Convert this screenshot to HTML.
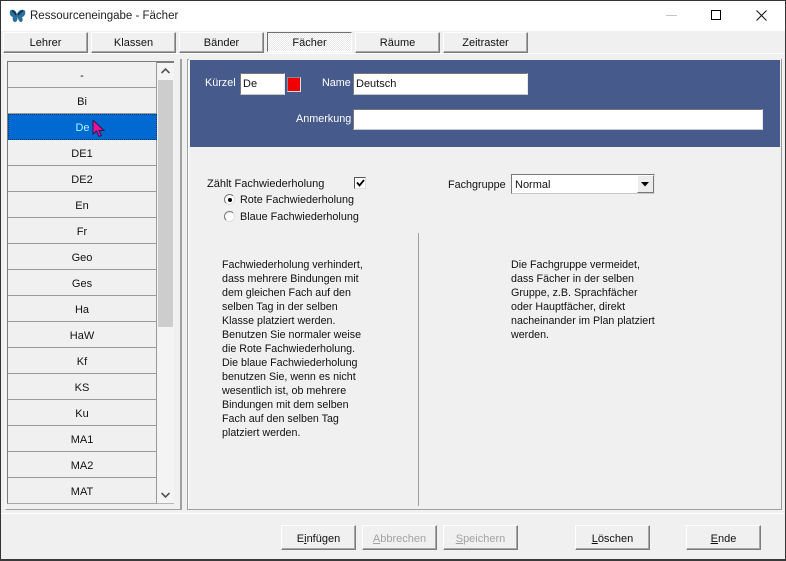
<!DOCTYPE html>
<html><head><meta charset="utf-8"><style>
html,body{margin:0;padding:0}
#w{position:relative;width:786px;height:561px;background:#f0f0f0;overflow:hidden;font-family:"Liberation Sans",sans-serif;font-size:11px;color:#111}
#w div,#w span.a{position:absolute;box-sizing:border-box}
.t{white-space:nowrap;line-height:14px}
.tab,.btn{display:flex;align-items:center;justify-content:center;background:#f0f0f0;border:1px solid;border-color:#fff #7c7c7c #7c7c7c #fff;box-shadow:inset -1px -1px 0 #a6a6a6;white-space:nowrap}
.tab{top:32px;height:21px;width:85px}
.btn{top:525px;height:25px;width:75px;padding-top:2px}
.dis{color:#a2a2a2}
.row{left:8px;width:149px;height:26px;text-align:center;line-height:26px;padding-top:1px;border-bottom:1px solid #9a9a9a;border-right:1px solid #9a9a9a;background:#f0f0f0}
.inp{background:#fff;border:1px solid;border-color:#777 #e8e8e8 #c8c8c8 #777;line-height:19px;padding-left:1px;padding-top:1px;white-space:nowrap}
.para{white-space:pre;line-height:14px;font-size:10.700px}
u{text-decoration:underline}
</style></head><body><div id="w">
<div style="left:0;top:0;width:786px;height:1px;background:#333"></div>
<div style="left:0;top:0;width:1px;height:561px;background:#333"></div>
<div style="right:0;top:0;width:1px;height:561px;background:#333"></div>
<div style="left:0;top:559px;width:786px;height:2px;background:#3a3a3a"></div>
<div style="left:1px;top:1px;width:784px;height:30px;background:#fff"></div>
<svg style="position:absolute;left:9px;top:8px" width="17" height="16" viewBox="0 0 17 16"><path d="M8 6C6 1 2 1 1 3c-1 3 1 6 3 6-1 2 0 5 2 5s3-3 2.500-6C9 11 10 14 12 14c2 0 2-3 1-5 2 0 4-3 3-6-1-2-6-2-8 3z" fill="#2b6f9c"/><path d="M3 3c1 0 3 1 4 4M14 3c-1 0-3 1-5 4" stroke="#0c2c44" fill="none" stroke-width="1.500"/></svg>
<div class="t" style="left:30px;top:9px;font-size:11.500px;color:#222">Ressourceneingabe - Fächer</div>
<div style="left:666px;top:15px;width:11px;height:1px;background:#c4c4c4"></div>
<div style="left:711px;top:10px;width:10px;height:10px;border:1px solid #000"></div>
<svg style="position:absolute;left:756px;top:10px" width="11" height="11"><path d="M.5.500l10 10M10.500.500l-10 10" stroke="#111" fill="none"/></svg>

<div class="tab" style="left:3px">Lehrer</div>
<div class="tab" style="left:91px">Klassen</div>
<div class="tab" style="left:179px">Bänder</div>
<div class="tab" style="left:267px;top:32px;height:20px;border-color:#6f6f6f #fff #fff #6f6f6f;box-shadow:none;background:repeating-conic-gradient(#fff 0 25%,#e6e6e6 0 50%) 0 0/2px 2px;padding-top:2px">Fächer</div>
<div class="tab" style="left:355px">Räume</div>
<div class="tab" style="left:443px">Zeitraster</div>

<div style="left:1px;top:53px;width:784px;height:1px;background:#fff"></div>
<div style="left:5px;top:59px;width:177px;height:451px;border:1px solid #a0a0a0;border-left-color:#f8f8f8;border-top:0;border-right-width:2px"></div>
<div style="left:7px;top:61px;width:167px;height:443px;border:1px solid #7d7d7d;border-right:0;border-bottom-color:#b5b5b5;background:#f4f4f4;"></div>
<div style="left:7px;top:61px;width:167px;height:2px;background:#7d7d7d"></div>
<div class="row" style="top:62px">-</div>
<div class="row" style="top:88px">Bi</div>
<div class="row" style="top:114px;background:#0069d2;color:#aef4ff;border:1px dotted #123a60;left:8px;line-height:25px">De</div>
<div class="row" style="top:140px">DE1</div>
<div class="row" style="top:166px">DE2</div>
<div class="row" style="top:192px">En</div>
<div class="row" style="top:218px">Fr</div>
<div class="row" style="top:244px">Geo</div>
<div class="row" style="top:270px">Ges</div>
<div class="row" style="top:296px">Ha</div>
<div class="row" style="top:322px">HaW</div>
<div class="row" style="top:348px">Kf</div>
<div class="row" style="top:374px">KS</div>
<div class="row" style="top:400px">Ku</div>
<div class="row" style="top:426px">MA1</div>
<div class="row" style="top:452px">MA2</div>
<div class="row" style="top:478px;border-bottom:1px solid #a8a8a8">MAT</div>
<div style="left:158px;top:80px;width:15px;height:247px;background:#cdcdcd"></div>
<svg style="position:absolute;left:161px;top:68px" width="9" height="6"><path d="M.5 5L4.500 1 8.500 5" stroke="#555" stroke-width="1.600" fill="none"/></svg>
<svg style="position:absolute;left:161px;top:492px" width="9" height="6"><path d="M.5 1L4.500 5 8.500 1" stroke="#555" stroke-width="1.600" fill="none"/></svg>
<svg style="position:absolute;left:92px;top:120px" width="14" height="18"><path d="M1 0v14l3.500-3 2.500 5.500 2.500-1-2.500-5h5z" fill="#e6129a" stroke="#2a1a4a"/></svg>

<div style="left:187px;top:59px;width:595px;height:451px;border:1px solid #a0a0a0;border-left:2px solid #a0a0a0;border-top:0;border-right-color:#9a9a9a"></div>
<div style="left:188px;top:60px;width:592px;height:449px;background:#f0f0f0;border-left:1px solid #fff"></div>
<div style="left:190px;top:60px;width:590px;height:87px;background:#465a8c"></div>

<div class="t" style="left:205px;top:76px;color:#fff;font-size:10.800px">Kürzel</div>
<div class="inp" style="left:240px;top:73px;width:45px;height:22px;padding-left:2px">De</div>
<div style="left:287px;top:77px;width:14px;height:15px;background:#f00000;border:1px solid #d8d8d8;border-color:#8a8a8a #ddd #ddd #8a8a8a"></div>
<div class="t" style="left:322px;top:76px;color:#fff;font-size:10.800px">Name</div>
<div class="inp" style="left:353px;top:73px;width:175px;height:22px;padding-left:2px">Deutsch</div>
<div class="t" style="left:296px;top:112px;color:#fff;font-size:10.800px">Anmerkung</div>
<div class="inp" style="left:353px;top:109px;width:410px;height:21px"></div>

<div class="t" style="left:207px;top:177px">Zählt Fachwiederholung</div>
<div style="left:354px;top:177px;width:12px;height:12px;background:#fff;border:1px solid #666;border-color:#555 #ddd #ddd #555"></div>
<svg style="position:absolute;left:356px;top:179px" width="9" height="8"><path d="M1 3.500l2.500 3L8 1" stroke="#000" stroke-width="1.800" fill="none"/></svg>
<div style="left:224px;top:194px;width:11px;height:11px;border-radius:50%;background:#fff;border:1px solid #777;border-right-color:#ddd;border-bottom-color:#ddd"></div>
<div style="left:228px;top:198px;width:4px;height:4px;border-radius:50%;background:#000"></div>
<div class="t" style="left:240px;top:193px;font-size:10.800px">Rote Fachwiederholung</div>
<div style="left:224px;top:211px;width:11px;height:11px;border-radius:50%;background:#fff;border:1px solid #777;border-right-color:#ddd;border-bottom-color:#ddd"></div>
<div class="t" style="left:240px;top:210px;font-size:10.800px">Blaue Fachwiederholung</div>

<div class="t" style="left:448px;top:178px;font-size:10.800px">Fachgruppe</div>
<div class="inp" style="left:511px;top:174px;width:144px;height:20px;padding-left:3px;line-height:18px">Normal</div>
<div style="left:637px;top:175px;width:17px;height:18px;background:#ececec;border:1px solid;border-color:#fff #777 #777 #fff"></div>
<svg style="position:absolute;left:641px;top:182px" width="9" height="5"><path d="M0 0h8L4 4.500z" fill="#000"/></svg>

<div class="para t" style="left:222px;top:258px">Fachwiederholung verhindert,
dass mehrere Bindungen mit
dem gleichen Fach auf den
selben Tag in der selben
Klasse platziert werden.
Benutzen Sie normaler weise
die Rote Fachwiederholung.
Die blaue Fachwiederholung
benutzen Sie, wenn es nicht
wesentlich ist, ob mehrere
Bindungen mit dem selben
Fach auf den selben Tag
platziert werden.</div>
<div style="left:418px;top:233px;width:1px;height:273px;background:#a0a0a0"></div>
<div class="para t" style="left:511px;top:258px">Die Fachgruppe vermeidet,
dass Fächer in der selben
Gruppe, z.B. Sprachfächer
oder Hauptfächer, direkt
nacheinander im Plan platziert
werden.</div>

<div style="left:1px;top:513px;width:784px;height:1px;background:#fff"></div>
<div class="btn" style="left:281px">E<u>i</u>nfügen</div>
<div class="btn dis" style="left:362px"><u>A</u>bbrechen</div>
<div class="btn dis" style="left:443px"><u>S</u>peichern</div>
<div class="btn" style="left:575px"><u>L</u>öschen</div>
<div class="btn" style="left:686px"><u>E</u>nde</div>
</div></body></html>
